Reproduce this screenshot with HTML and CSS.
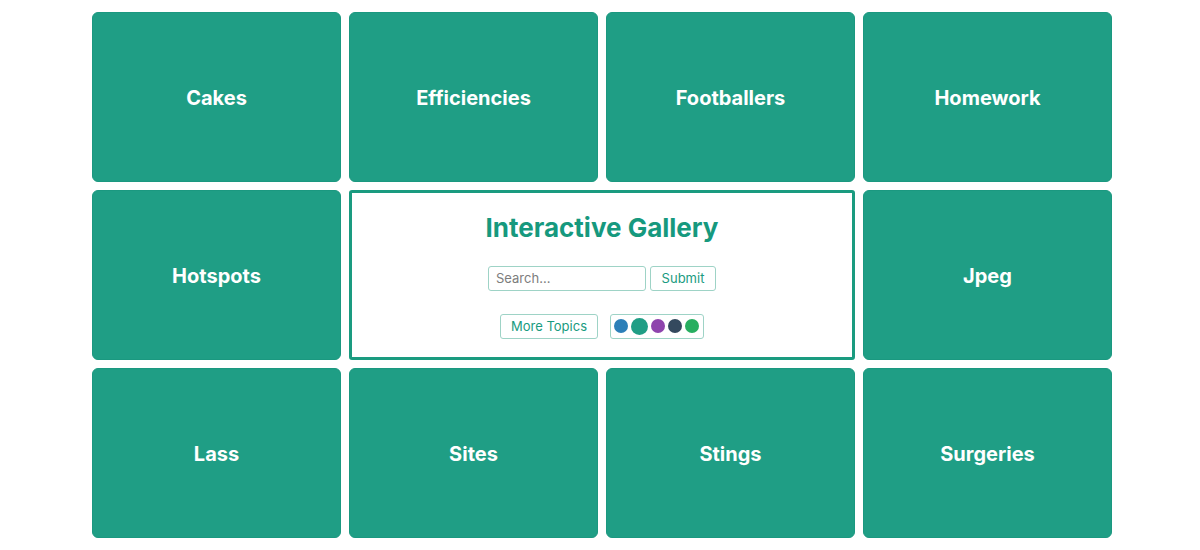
FILE: index.html
```html
<!DOCTYPE html>
<html lang="en">
<head>
<meta charset="utf-8">
<title>Interactive Gallery</title>
<link rel="stylesheet" href="styles.css">
</head>
<body>
<main class="gallery">
  <div class="tile">Cakes</div>
  <div class="tile">Efficiencies</div>
  <div class="tile">Footballers</div>
  <div class="tile">Homework</div>
  <div class="tile">Hotspots</div>
  <section class="panel">
    <h1 class="panel-title">Interactive Gallery</h1>
    <form class="search-row">
      <input class="search-input" type="text" placeholder="Search...">
      <button class="btn btn-submit" type="button">Submit</button>
    </form>
    <div class="tools-row">
      <button class="btn btn-topics" type="button">More Topics</button>
      <div class="swatches">
        <span class="dot dot-blue"></span>
        <span class="dot dot-teal"></span>
        <span class="dot dot-purple"></span>
        <span class="dot dot-navy"></span>
        <span class="dot dot-green"></span>
      </div>
    </div>
  </section>
  <div class="tile">Jpeg</div>
  <div class="tile">Lass</div>
  <div class="tile">Sites</div>
  <div class="tile">Stings</div>
  <div class="tile">Surgeries</div>
</main>
</body>
</html>
```

FILE: styles.css
```css
* { box-sizing: border-box; }

html, body {
  margin: 0;
  background: #ffffff;
  font-family: Inter, "Noto Sans", "Liberation Sans", sans-serif;
}

.gallery {
  width: 1020px;
  margin: 12px 0 0 92px;
  display: grid;
  grid-template-columns: repeat(4, 1fr);
  grid-auto-rows: 170px;
  gap: 8px;
}

.tile {
  background: #1f9e85;
  border: 1px solid #1b9880;
  border-radius: 6px;
  color: #ffffff;
  font-size: 20px;
  font-weight: 700;
  display: flex;
  align-items: center;
  justify-content: center;
  padding-top: 2px;
}

.panel {
  grid-column: span 2;
  background: #ffffff;
  border: 3px solid #1a9b80;
  border-radius: 3px;
  display: flex;
  flex-direction: column;
  align-items: center;
  justify-content: center;
}

.panel-title {
  margin: 0;
  font-size: 26px;
  line-height: 32px;
  font-weight: 700;
  color: #16997e;
}

.search-row {
  margin: 22px 0 0;
  display: flex;
  gap: 4px;
}

.search-input {
  width: 158px;
  height: 25px;
  border: 1px solid #9ed3c6;
  border-radius: 3px;
  padding: 0 7px;
  font-family: inherit;
  font-size: 13px;
  color: #333;
  outline: none;
}

.search-input::placeholder { color: #7d7d7d; }

.btn {
  height: 25px;
  padding: 0;
  border: 1px solid #9ed3c6;
  border-radius: 3px;
  background: #ffffff;
  color: #1a9b80;
  font-family: inherit;
  font-size: 13px;
  line-height: 23px;
}

.btn-submit { width: 66px; }

.tools-row {
  margin-top: 23px;
  display: flex;
  gap: 12px;
}

.btn-topics { width: 98px; }

.swatches {
  height: 25px;
  width: 94px;
  border: 1px solid #9ed3c6;
  border-radius: 3px;
  display: flex;
  align-items: center;
  padding: 0 3px;
  gap: 3px;
}

.dot {
  width: 14px;
  height: 14px;
  border-radius: 50%;
  display: block;
}

.dot-blue { background: #2c7fb8; }
.dot-teal { background: #1f9e85; width: 17px; height: 17px; }
.dot-purple { background: #8e44ad; }
.dot-navy { background: #34495e; }
.dot-green { background: #27ae60; }
```
